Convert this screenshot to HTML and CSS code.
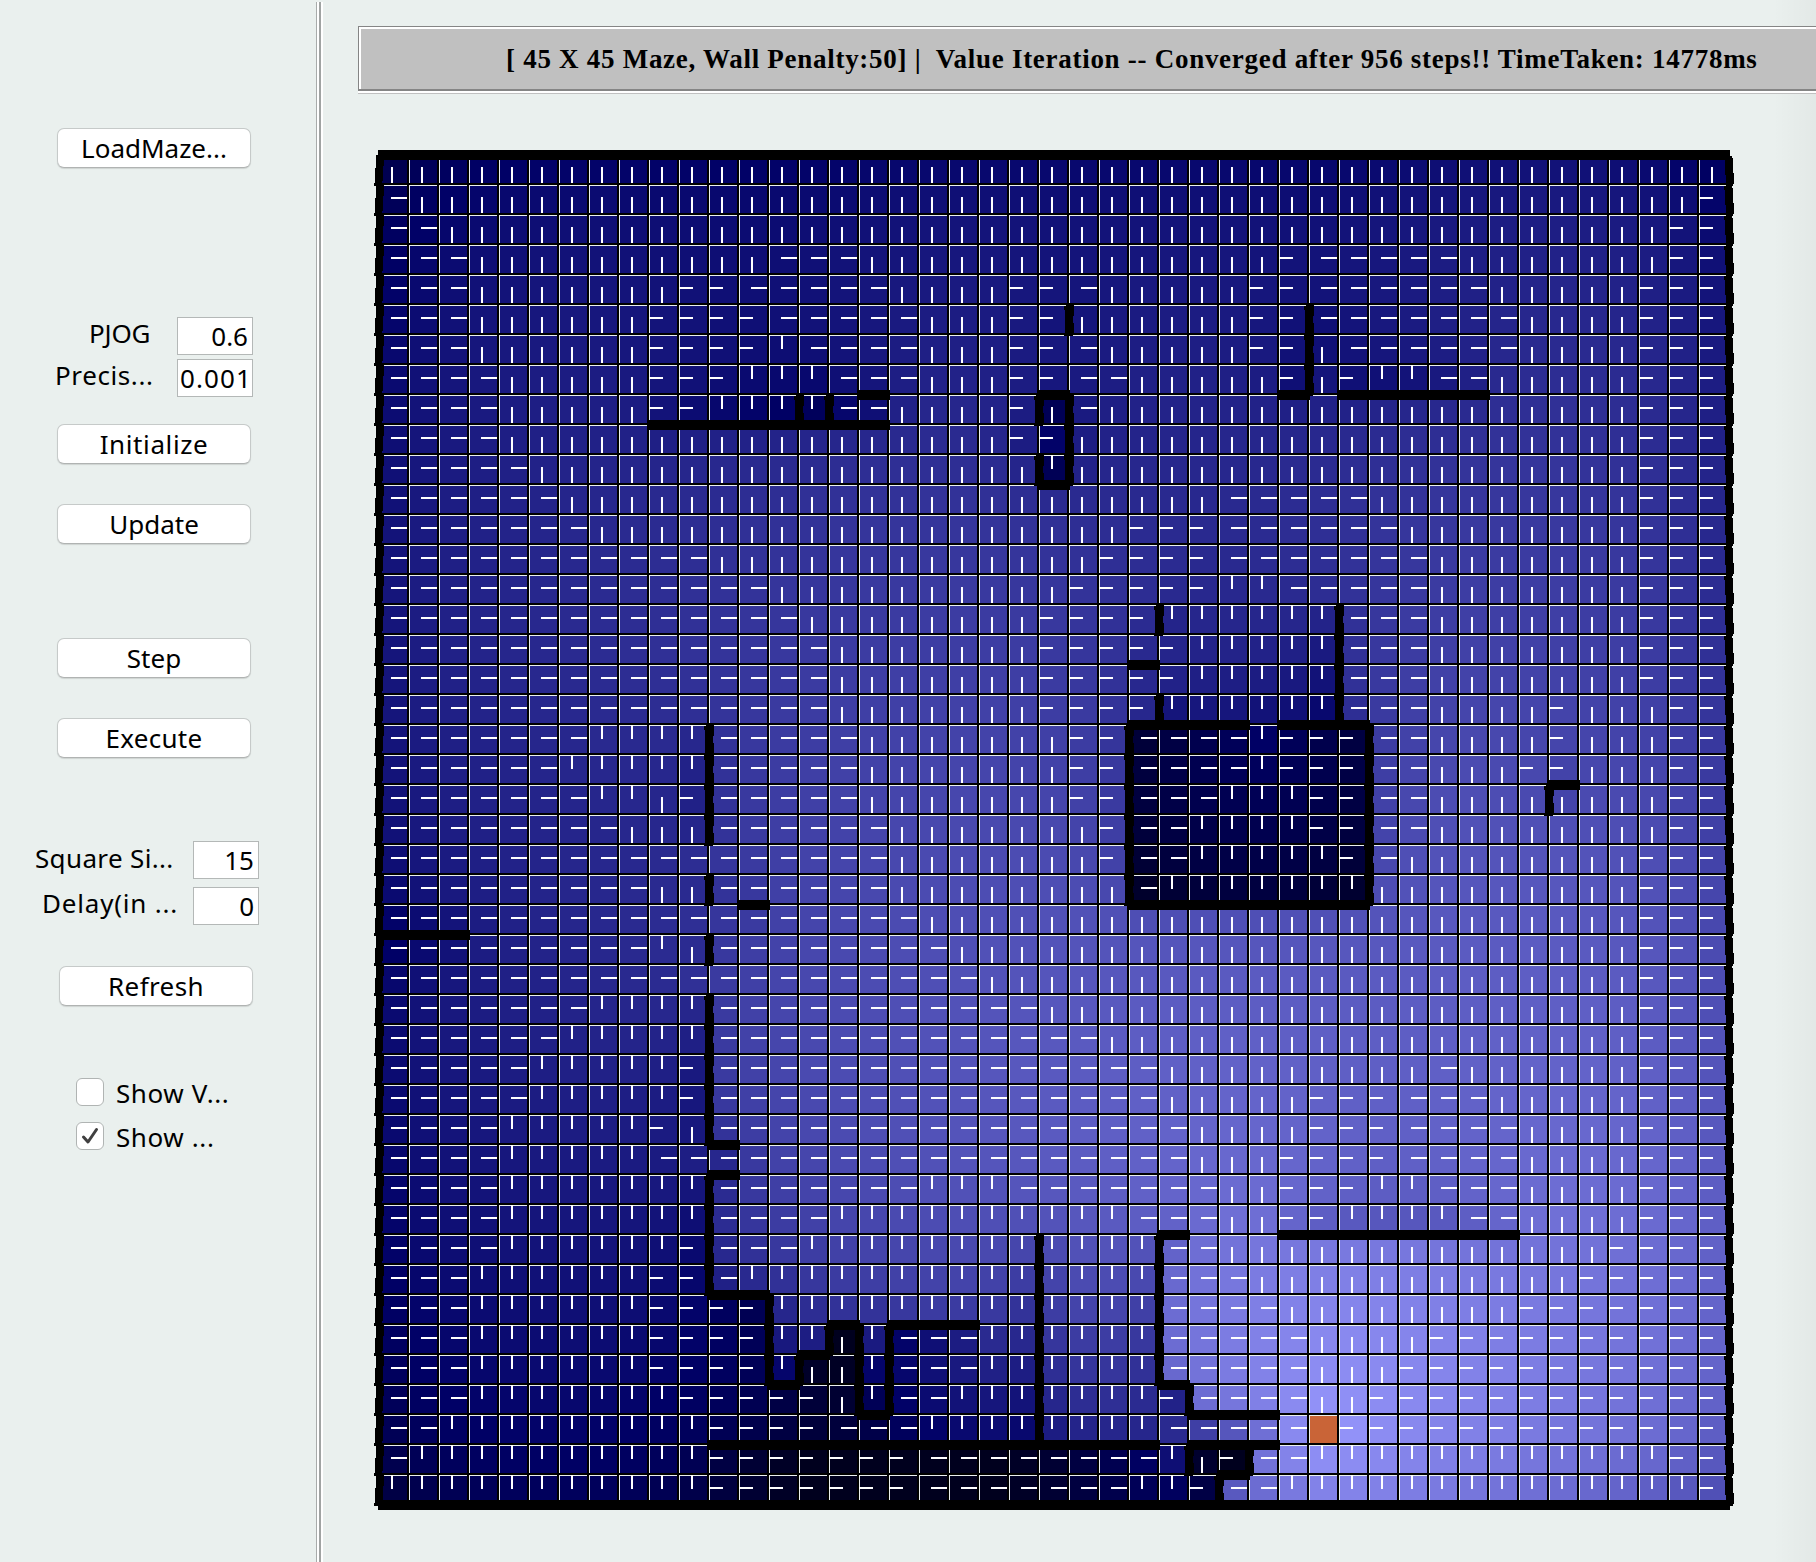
FILE: index.html
```html
<!DOCTYPE html>
<html lang="en">
<head>
<meta charset="utf-8">
<title>Maze - Value Iteration</title>
<link rel="stylesheet" href="styles.css">
</head>
<body>
<div class="app">
  <aside class="sidebar">
    <button class="btn btn-load">LoadMaze...</button>
    <div class="fields params">
      <label class="field"><span class="name name-pjog">PJOG</span><input class="entry" value="0.6"></label>
      <label class="field"><span class="name name-precision">Precis...</span><input class="entry entry-tight" value="0.001"></label>
    </div>
    <button class="btn btn-init">Initialize</button>
    <button class="btn btn-update">Update</button>
    <button class="btn btn-step">Step</button>
    <button class="btn btn-execute">Execute</button>
    <div class="fields view">
      <label class="field"><span class="name name-size">Square Si...</span><input class="entry" value="15"></label>
      <label class="field"><span class="name name-delay">Delay(in ...</span><input class="entry" value="0"></label>
    </div>
    <button class="btn btn-refresh">Refresh</button>
    <div class="checks">
      <div class="check"><span class="box"></span><span class="check-text">Show V...</span></div>
      <div class="check"><span class="box"><svg class="tick" viewBox="0 0 28 28"><path d="M7.500 15L12 20L20.500 7.500"/></svg></span><span class="check-text">Show ...</span></div>
    </div>
  </aside>
  <div class="divider"></div>
  <main class="content">
    <div class="status"><span class="status-text">[ 45 X 45 Maze, Wall Penalty:50] |&nbsp; Value Iteration -- Converged after 956 steps!! TimeTaken: 14778ms</span></div>
    <svg class="maze" id="maze" viewBox="-6 -6 1362 1362" shape-rendering="crispEdges"></svg>
  </main>
</div>
<script src="maze.js"></script>
</body>
</html>
```
FILE: styles.css
```css
body {
  margin: 0;
  background: #eaf0ee;
  overflow: hidden;
}
.app {
  display: flex;
  width: 1816px;
  height: 1562px;
  overflow: hidden;
  font-family: "Noto Sans", "Open Sans", sans-serif;
  font-size: 26px;
  color: #000;
}
.sidebar {
  display: flex;
  flex-direction: column;
  align-items: flex-start;
  flex: 0 0 316px;
}
.btn {
  width: 194px;
  height: 40px;
  margin-left: 57px;
  padding: 0;
  border: 1px solid #c6cac9;
  border-bottom-color: #b0b3b2;
  border-radius: 7px;
  background: #fff;
  box-shadow: 0 1px 1px rgba(0, 0, 0, 0.12);
  font: inherit;
  line-height: 36px;
  color: #000;
}
.btn-load { margin-top: 128px; }
.btn-init { margin-top: 27px; letter-spacing: 0.6px; }
.btn-update { margin-top: 40px; }
.btn-step { margin-top: 94px; }
.btn-execute { margin-top: 40px; letter-spacing: 0.3px; }
.btn-refresh { margin-top: 41px; margin-left: 59px; letter-spacing: 0.4px; }
.fields {
  display: flex;
  flex-direction: column;
}
.field {
  display: flex;
}
.params { margin-top: 149px; gap: 4px; width: 253px; }
.view { margin-top: 83px; gap: 8px; width: 259px; }
.name {
  flex: 1;
  line-height: 32px;
  white-space: nowrap;
}
.name-pjog { padding-left: 89px; letter-spacing: -0.2px; }
.name-precision { padding-left: 55px; letter-spacing: 0.6px; }
.name-size { padding-left: 35px; letter-spacing: 0.35px; line-height: 34px; }
.name-delay { padding-left: 42px; letter-spacing: 0.8px; }
.entry {
  box-sizing: border-box;
  flex: none;
  width: 76px;
  height: 38px;
  padding: 1px 4px 1px 0;
  border: 1px solid #b4b8b7;
  border-radius: 0;
  background: #fff;
  font: inherit;
  text-align: right;
  color: #000;
}
.entry-tight { padding-right: 0; letter-spacing: 1.1px; }
.view .entry { width: 66px; }
.checks {
  display: flex;
  flex-direction: column;
  gap: 16px;
  margin: 72px 0 0 76px;
}
.check {
  display: flex;
  gap: 12px;
  height: 28px;
}
.box {
  box-sizing: border-box;
  width: 28px;
  height: 28px;
  border: 1px solid #b0b4b3;
  border-radius: 6px;
  background: #fff;
}
.tick {
  display: block;
  width: 28px;
  height: 28px;
  margin: -1px;
  fill: none;
  stroke: #404040;
  stroke-width: 3;
  stroke-linecap: round;
  stroke-linejoin: round;
}
.check-text {
  line-height: 30px;
  white-space: nowrap;
  letter-spacing: 0.6px;
}
.divider {
  flex: none;
  box-sizing: border-box;
  width: 7px;
  margin-top: 2px;
  background: linear-gradient(90deg, #a8abaa 1px, #fff 1px 3px, #a0a3a2 3px 5px, #fff 5px);
}
.content {
  display: flex;
  flex-direction: column;
  flex: 1;
  min-width: 0;
  background: linear-gradient(90deg, transparent 1450px, rgba(0, 0, 0, 0.03) 1493px);
}
.status {
  box-sizing: border-box;
  flex: none;
  width: 1500px;
  height: 65px;
  margin: 26px 0 0 35px;
  padding-left: 147px;
  border: 1px solid #858585;
  border-bottom-width: 2px;
  background: #c0c0c0;
  box-shadow: inset 2px 2px 0 #fff, 0 2px 0 #fff, 0 3px 0 #c0c0c0;
}
.status-text {
  font: bold 27px/65px "Liberation Serif", serif;
  letter-spacing: 0.72px;
  white-space: nowrap;
}
.maze {
  flex: none;
  display: block;
  width: 1362px;
  height: 1362px;
  margin: 58px 0 0 50px;
}
```
FILE: maze.js
```js
const N = 45, CELL = 30;
const GOAL = 42 * N + 31;
const PJOG = 0.6, PENALTY = 50, PRECISION = 0.001;

// Horizontal walls: [line, first column, end column]
const H_WALLS = [
  [0,0,45],[45,0,45],
  [9,9,17],[8,16,17],[8,22,23],[11,22,23],[8,30,31],[8,32,37],
  [17,25,26],[19,25,29],[19,30,33],[25,25,33],[21,39,40],[25,12,13],[26,0,3],
  [33,11,12],[34,11,12],[38,11,13],[41,13,14],[40,14,15],[39,15,16],[42,16,17],[39,17,20],
  [43,11,26],[36,26,27],[41,26,27],[42,27,30],[43,27,30],[44,28,29],[36,30,38]
];
// Vertical walls: [line, first row, end row]
const V_WALLS = [
  [0,0,45],[45,0,45],
  [14,8,9],[15,8,9],[23,5,6],[22,8,9],[23,8,11],[22,10,11],[31,5,8],
  [26,15,16],[26,18,19],[25,19,25],[33,19,25],[32,15,19],[39,21,22],
  [11,19,23],[11,24,25],[11,26,27],[11,28,33],[11,34,38],[13,38,41],[14,40,41],[15,39,40],
  [16,39,42],[17,39,42],[22,36,43],[26,36,41],[27,41,42],[27,43,44],[29,43,44],[28,44,45]
];

const blockedH = new Set(), blockedV = new Set();
H_WALLS.forEach(([y, a, b]) => { for (let c = a; c < b; c++) blockedH.add(y * 100 + c); });
V_WALLS.forEach(([x, a, b]) => { for (let r = a; r < b; r++) blockedV.add(r * 100 + x); });

// Neighbour of each cell going up, right, down, left; -1 where a wall is hit
const next = [];
for (let r = 0; r < N; r++) for (let c = 0; c < N; c++) {
  next.push([
    blockedH.has(r * 100 + c) ? -1 : (r - 1) * N + c,
    blockedV.has(r * 100 + c + 1) ? -1 : r * N + c + 1,
    blockedH.has((r + 1) * 100 + c) ? -1 : (r + 1) * N + c,
    blockedV.has(r * 100 + c) ? -1 : r * N + c - 1
  ]);
}

// Value iteration: the chosen move succeeds with 1 - PJOG, each other one has PJOG / 3
function solve() {
  const intended = 1 - PJOG, other = PJOG / 3;
  let v = new Float64Array(N * N), delta = 1;
  const policy = [];
  while (delta > PRECISION) {
    const w = new Float64Array(N * N);
    delta = 0;
    for (let s = 0; s < N * N; s++) {
      if (s === GOAL) continue;
      const q = next[s].map(t => t < 0 ? 1 + PENALTY + v[s] : 1 + v[t]);
      const sum = q[0] + q[1] + q[2] + q[3];
      let best = Infinity;
      for (let a = 0; a < 4; a++) {
        const x = intended * q[a] + other * (sum - q[a]);
        if (x < best - 1e-9) { best = x; policy[s] = "URDL"[a]; }
      }
      w[s] = best;
      delta = Math.max(delta, Math.abs(best - v[s]));
    }
    v = w;
  }
  return { v, policy };
}

const { v, policy } = solve();
const vmax = Math.max(...v);

function cellColor(s) {
  if (s === GOAL) return "#c96437";
  const blue = Math.max(30, Math.round(255 * (1 - v[s] / vmax)));
  const rest = Math.max(0, blue - 102);
  return `rgb(${rest},${rest},${blue})`;
}

const ARROW = { U: "v14h2v-14z", D: "v16h2v-16z", L: "h14v2h-14z", R: "h16v2h-16z" };
const START = { U: [12, 0], D: [12, 12], L: [0, 12], R: [12, 12] };
let cells = "", edges = "", arrows = "", walls = "";
for (let s = 0; s < N * N; s++) {
  const x = s % N * CELL, y = Math.floor(s / N) * CELL, act = policy[s];
  edges += `M${x} ${y}h28v28h-28z`;
  cells += `<rect x="${x + 1}" y="${y + 1}" width="27" height="27" fill="${cellColor(s)}"/>`;
  if (act) arrows += `M${x + START[act][0]} ${y + START[act][1]}${ARROW[act]}`;
}
H_WALLS.forEach(([y, a, b]) => {
  walls += `M${a * CELL - 1} ${y * CELL - 5}H${b * CELL + 1}v10H${a * CELL - 1}z`;
});
// A vertical wall is two slightly slanted strokes, one from the cell on each side
V_WALLS.forEach(([x, a, b]) => {
  for (let r = a; r < b; r++) {
    const X = x * CELL, Y = r * CELL;
    if (x > 0) walls += `M${X - 5} ${Y + 1}H${X + 3}v2h1v15h1v11h-1v2H${X - 3}v-11h-1v-15h-1z`;
    if (x < N) walls += `M${X - 3} ${Y}H${X + 5}v11h-1v15h-1v5H${X - 5}v-3h1v-15h1z`;
  }
});
document.getElementById("maze").innerHTML =
  `<rect width="1350" height="1350"/><path d="${edges}" fill="#eaf0ee"/>${cells}` +
  `<path d="${arrows}" fill="#fff"/><path d="${walls}"/>`;
```
